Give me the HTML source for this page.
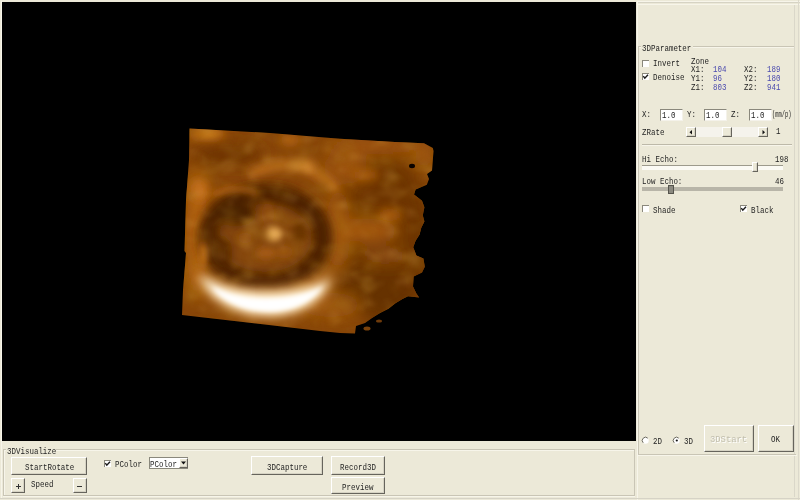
<!DOCTYPE html>
<html><head><meta charset="utf-8">
<style>
html,body{margin:0;padding:0;}
body{width:800px;height:500px;overflow:hidden;background:#ECE9D8;position:relative;font-family:"Liberation Mono",monospace;}
.a{position:absolute;}
.t{position:absolute;font-size:9px;line-height:10px;white-space:nowrap;color:#1e1e1e;transform:scaleX(.83);transform-origin:0 0;}
.b{color:#4a4aae;}
.hl{position:absolute;height:1px;background:#c9c5b5;}
.hw{position:absolute;height:1px;background:#f7f5ea;}
.vl{position:absolute;width:1px;background:#c9c5b5;}
.vw{position:absolute;width:1px;background:#f7f5ea;}
.btn{position:absolute;background:#ECE9D8;border-top:1px solid #fff;border-left:1px solid #fff;border-right:1px solid #66645c;border-bottom:1px solid #66645c;box-sizing:border-box;}
.btn::after{content:"";position:absolute;left:0;top:0;right:0;bottom:0;border-right:1px solid #d6d3c4;border-bottom:1px solid #d6d3c4;}
.chk{position:absolute;width:7px;height:7px;background:#fff;border-top:1px solid #8a887c;border-left:1px solid #8a887c;box-sizing:border-box;}
.inp{position:absolute;background:#fff;border-top:1px solid #8a887c;border-left:1px solid #8a887c;border-right:1px solid #f4f2ea;border-bottom:1px solid #f4f2ea;box-sizing:border-box;}
</style></head><body>

<!-- black viewport -->
<div class="a" style="left:2px;top:2px;width:634px;height:439px;background:#000;overflow:hidden;">
<svg width="634" height="439" viewBox="2 2 634 439" style="position:absolute;left:0;top:0;">
  <defs>
    <clipPath id="vol">
      <polygon points="189.5,128.5 270,133 340,138.7 395,141.9 424,143.3 432.8,148 433.5,151 432,170.6 427,174 429,179 426.8,184.8 415.6,189.6 414,194.4 422,200.8 424.4,207.2 422.8,215.2 424.4,221.6 421.2,228 419.6,234.4 415.6,240.8 413.2,247.2 414.3,250 416.4,255.6 423.4,258.4 424.8,266.8 422,272.4 413.6,276.6 413,286.4 416.4,293.4 419.2,297.6 408,296.2 402.4,299 395.4,303.2 388.4,308.8 380,313 372,318 365,323 356,326 355,333.5 340,333 320,331 182,315 183,290 186,253 184.5,251 186,200 189,160"/>
    </clipPath>
    <filter id="b8" filterUnits="userSpaceOnUse" x="100" y="80" width="400" height="320"><feGaussianBlur stdDeviation="8"/></filter>
    <filter id="b5" filterUnits="userSpaceOnUse" x="100" y="80" width="400" height="320"><feGaussianBlur stdDeviation="5"/></filter>
    <filter id="b3" filterUnits="userSpaceOnUse" x="100" y="80" width="400" height="320"><feGaussianBlur stdDeviation="3"/></filter>
    <filter id="b2" filterUnits="userSpaceOnUse" x="100" y="80" width="400" height="320"><feGaussianBlur stdDeviation="2"/></filter>
    <filter id="tex" filterUnits="userSpaceOnUse" x="150" y="100" width="320" height="260">
      <feTurbulence type="fractalNoise" baseFrequency="0.045 0.07" numOctaves="3" seed="11"/>
      <feColorMatrix type="matrix" values="0 0 0 0 0.36  0 0 0 0 0.16  0 0 0 0 0.01  0 0 0 3 -1.45"/>
      <feGaussianBlur stdDeviation="2"/>
    </filter>
    <filter id="tex2" filterUnits="userSpaceOnUse" x="150" y="100" width="320" height="260">
      <feTurbulence type="fractalNoise" baseFrequency="0.05 0.08" numOctaves="3" seed="5"/>
      <feColorMatrix type="matrix" values="0 0 0 0 0.85  0 0 0 0 0.5  0 0 0 0 0.1  0 0 0 3 -1.55"/>
      <feGaussianBlur stdDeviation="2"/>
    </filter>
  </defs>
  <g clip-path="url(#vol)">
    <rect x="150" y="100" width="320" height="260" fill="#884608"/>
    <g filter="url(#b8)">
      <ellipse cx="385" cy="240" rx="48" ry="85" fill="#6c3405"/>
      <ellipse cx="375" cy="290" rx="45" ry="25" fill="#663104"/>
      <ellipse cx="375" cy="185" rx="45" ry="28" fill="#6e3605"/>
      <ellipse cx="366" cy="230" rx="32" ry="11" fill="#a85a0c"/>
      <ellipse cx="345" cy="168" rx="22" ry="16" fill="#9c520a"/>
      <ellipse cx="385" cy="256" rx="25" ry="8" fill="#8a4808"/>
      <ellipse cx="424" cy="156" rx="8" ry="12" fill="#a85e0e"/>
      <ellipse cx="378" cy="146" rx="50" ry="8" fill="#a0540a"/>
      <ellipse cx="197" cy="235" rx="10" ry="65" fill="#ba6810"/>
      <ellipse cx="228" cy="155" rx="36" ry="10" fill="#6c3205"/>
      <ellipse cx="412" cy="235" rx="10" ry="60" fill="#6e3605"/>
      <ellipse cx="338" cy="230" rx="12" ry="40" fill="#a45a0c"/>
      <ellipse cx="330" cy="305" rx="30" ry="12" fill="#9e560c"/>
    </g>
    <g filter="url(#b5)">
      <ellipse cx="207" cy="134" rx="18" ry="5" fill="#cd7819"/>
      <ellipse cx="290" cy="140" rx="10" ry="4" fill="#c27018"/>
      <path d="M250,174 Q300,150 337,190" stroke="#c87620" stroke-width="8" fill="none"/>
      <ellipse cx="302" cy="164" rx="12" ry="4" fill="#e19637"/>
      <ellipse cx="199" cy="190" rx="9" ry="12" fill="#c4701a"/>
      <ellipse cx="365" cy="175" rx="14" ry="5" fill="#ac5e0c"/>
      <ellipse cx="390" cy="215" rx="12" ry="6" fill="#ac5e0c"/>
    </g>
    <g filter="url(#b5)">
      <ellipse cx="267" cy="238" rx="52" ry="39" fill="#86460a"/>
      <ellipse cx="265" cy="238" rx="57" ry="44" fill="none" stroke="#4e2402" stroke-width="20"/>
      <ellipse cx="236" cy="214" rx="20" ry="12" fill="#4a2202"/>
      <ellipse cx="222" cy="252" rx="10" ry="16" fill="#542703"/>
    </g>
    <g filter="url(#b3)">
      <ellipse cx="268" cy="214" rx="6" ry="11" fill="#8e4c0e"/>
      <ellipse cx="266" cy="253" rx="10" ry="6" fill="#a45a14"/>
      <ellipse cx="274" cy="234" rx="8" ry="7" fill="#ebaf5a"/>
      <ellipse cx="300" cy="232" rx="8" ry="10" fill="#6a3405"/>
      <ellipse cx="284" cy="252" rx="9" ry="6" fill="#9a5410"/>
      <ellipse cx="245" cy="238" rx="7" ry="5" fill="#92500e"/>
      <path d="M212,195 Q235,184 258,194" stroke="#bc6a14" stroke-width="4" fill="none"/>
      <ellipse cx="203" cy="255" rx="4" ry="14" fill="#bc6a14"/>
    </g>
    <rect x="150" y="100" width="320" height="260" filter="url(#tex)" opacity="0.35"/>
    <rect x="150" y="100" width="320" height="260" filter="url(#tex2)" opacity="0.22"/>
    <g filter="url(#b8)">
      <path d="M196,270 C210,322 312,340 338,268 C300,296 230,300 196,270 Z" fill="#dc9a48"/>
    </g>
    <g filter="url(#b5)">
      <path d="M200,274 C210,318 306,336 331,279 C300,297 230,299 200,274 Z" fill="#fff2d8"/>
    </g>
    <g filter="url(#b2)">
      <path d="M212,286 C228,314 296,325 323,286 C296,302 240,304 212,286 Z" fill="#ffffff"/>
    </g>
    <ellipse cx="412" cy="166" rx="3" ry="2.2" fill="#0a0400"/>
  </g>
  <ellipse cx="367" cy="328.5" rx="3.5" ry="2" fill="#7a420c"/>
  <ellipse cx="379" cy="321" rx="3" ry="1.6" fill="#6e3a0a"/>
</svg>
</div>

<!-- right panel frame -->
<div class="hw" style="left:637px;top:1px;width:163px;"></div>
<div class="hl" style="left:637px;top:2px;width:163px;background:#d6d3c4;"></div><div class="hw" style="left:637px;top:4px;width:163px;"></div>
<div class="vw" style="left:637px;top:1px;height:499px;"></div>
<div class="vl" style="left:794px;top:5px;height:492px;background:#dad7c9;"></div>
<div class="vl" style="left:798px;top:0px;height:500px;background:#dcd9cb;"></div>

<!-- 3DParameter group -->
<div class="hl" style="left:638px;top:46px;width:156px;"></div>
<div class="hw" style="left:638px;top:47px;width:156px;"></div>
<div class="vl" style="left:638px;top:46px;height:409px;"></div>
<div class="hl" style="left:638px;top:454px;width:158px;"></div>
<div class="hw" style="left:638px;top:455px;width:159px;"></div>
<div class="a" style="left:641px;top:42px;width:52px;height:10px;background:#ECE9D8;"></div>
<div class="t" style="left:642px;top:44px;">3DParameter</div>

<div class="chk" style="left:642px;top:60px;"></div>
<div class="t" style="left:653px;top:59px;">Invert</div>
<div class="chk" style="left:642px;top:73px;"></div>
<svg class="a" style="left:642px;top:73px;" width="8" height="8" viewBox="0 0 8 8"><polyline points="1.3,3.2 2.8,5.2 6,1.8" fill="none" stroke="#1a1a1a" stroke-width="1.4"/></svg>
<div class="t" style="left:653px;top:73px;">Denoise</div>

<div class="t" style="left:691px;top:57px;">Zone</div>
<div class="t" style="left:691px;top:65px;">X1:</div>
<div class="t b" style="left:713px;top:65px;">104</div>
<div class="t" style="left:744px;top:65px;">X2:</div>
<div class="t b" style="left:767px;top:65px;">189</div>
<div class="t" style="left:691px;top:74px;">Y1:</div>
<div class="t b" style="left:713px;top:74px;">96</div>
<div class="t" style="left:744px;top:74px;">Y2:</div>
<div class="t b" style="left:767px;top:74px;">180</div>
<div class="t" style="left:691px;top:83px;">Z1:</div>
<div class="t b" style="left:713px;top:83px;">803</div>
<div class="t" style="left:744px;top:83px;">Z2:</div>
<div class="t b" style="left:767px;top:83px;">941</div>

<div class="t" style="left:642px;top:110px;">X:</div>
<div class="inp" style="left:660px;top:109px;width:23px;height:12px;"></div>
<div class="t" style="left:662px;top:111px;">1.0</div>
<div class="t" style="left:687px;top:110px;">Y:</div>
<div class="inp" style="left:704px;top:109px;width:23px;height:12px;"></div>
<div class="t" style="left:706px;top:111px;">1.0</div>
<div class="t" style="left:731px;top:110px;">Z:</div>
<div class="inp" style="left:749px;top:109px;width:23px;height:12px;"></div>
<div class="t" style="left:751px;top:111px;">1.0</div>
<div class="t" style="left:772px;top:110px;transform:scaleX(.6);">(mm/p)</div>

<div class="t" style="left:642px;top:128px;">ZRate</div>
<div class="a" style="left:686px;top:127px;width:82px;height:10px;background:#f5f3ec;"></div>
<div class="btn" style="left:686px;top:127px;width:10px;height:10px;"></div><svg class="a" style="left:689px;top:130px;" width="4" height="5"><polygon points="3,0 3,4.5 0.5,2.25" fill="#111"/></svg>
<div class="btn" style="left:722px;top:127px;width:10px;height:10px;"></div>
<div class="btn" style="left:758px;top:127px;width:10px;height:10px;"></div><svg class="a" style="left:762px;top:130px;" width="4" height="5"><polygon points="0.5,0 0.5,4.5 3,2.25" fill="#111"/></svg>
<div class="t" style="left:776px;top:127px;">1</div>

<div class="hl" style="left:642px;top:144px;width:150px;background:#bdb9a9;"></div>
<div class="hw" style="left:642px;top:145px;width:150px;"></div>

<div class="t" style="left:642px;top:155px;">Hi Echo:</div>
<div class="t" style="left:775px;top:155px;">198</div>
<div class="a" style="left:642px;top:165px;width:141px;height:5px;background:#fbfaf4;border-top:1px solid #9d9a8c;box-sizing:border-box;"></div>
<div class="btn" style="left:752px;top:162px;width:6px;height:10px;"></div>

<div class="t" style="left:642px;top:177px;">Low Echo:</div>
<div class="t" style="left:775px;top:177px;">46</div>
<div class="a" style="left:642px;top:187px;width:141px;height:4px;background:#b8b5a8;"></div>
<div class="a" style="left:668px;top:185px;width:6px;height:9px;background:#8c8a80;border:1px solid #55544c;box-sizing:border-box;"></div>

<div class="chk" style="left:642px;top:205px;"></div>
<div class="t" style="left:653px;top:206px;">Shade</div>
<div class="chk" style="left:740px;top:205px;"></div>
<svg class="a" style="left:740px;top:205px;" width="8" height="8" viewBox="0 0 8 8"><polyline points="1.3,3.2 2.8,5.2 6,1.8" fill="none" stroke="#1a1a1a" stroke-width="1.4"/></svg>
<div class="t" style="left:751px;top:206px;">Black</div>

<svg class="a" style="left:641px;top:436px;" width="10" height="10" viewBox="0 0 10 10"><circle cx="4.5" cy="4.5" r="3.2" fill="#fff"/><path d="M2.2,6.8 A3.2,3.2 0 0 1 6.8,2.2" fill="none" stroke="#6a685e" stroke-width="1"/></svg>
<div class="t" style="left:653px;top:437px;">2D</div>
<svg class="a" style="left:672px;top:436px;" width="10" height="10" viewBox="0 0 10 10"><circle cx="4.5" cy="4.5" r="3.2" fill="#fff"/><path d="M2.2,6.8 A3.2,3.2 0 0 1 6.8,2.2" fill="none" stroke="#6a685e" stroke-width="1"/><circle cx="4.8" cy="4.5" r="1.1" fill="#111"/></svg>
<div class="t" style="left:684px;top:437px;">3D</div>
<div class="btn" style="left:704px;top:425px;width:50px;height:27px;"></div>
<div class="t" style="left:711px;top:436px;color:#fff;transform:scaleX(.98);">3DStart</div><div class="t" style="left:710px;top:435px;color:#c2bfae;transform:scaleX(.98);">3DStart</div>
<div class="btn" style="left:758px;top:425px;width:36px;height:27px;"></div>
<div class="t" style="left:771px;top:435px;">OK</div>

<!-- bottom group 3DVisualize -->
<div class="vw" style="left:1px;top:1px;height:498px;"></div>
<div class="hl" style="left:3px;top:449px;width:631px;"></div>
<div class="hw" style="left:3px;top:450px;width:632px;"></div>
<div class="vl" style="left:3px;top:449px;height:47px;"></div>
<div class="vw" style="left:4px;top:450px;height:46px;"></div>
<div class="vl" style="left:634px;top:449px;height:47px;"></div>
<div class="hl" style="left:3px;top:495px;width:631px;"></div>
<div class="hw" style="left:3px;top:496px;width:632px;"></div>
<div class="a" style="left:6px;top:445px;width:50px;height:10px;background:#ECE9D8;"></div>
<div class="t" style="left:7px;top:447px;">3DVisualize</div>

<div class="btn" style="left:11px;top:457px;width:76px;height:18px;"></div>
<div class="t" style="left:25px;top:463px;">StartRotate</div>
<div class="btn" style="left:11px;top:478px;width:14px;height:15px;"></div>
<div class="a" style="left:16px;top:486px;width:5px;height:1px;background:#333;"></div><div class="a" style="left:18px;top:484px;width:1px;height:5px;background:#333;"></div>
<div class="t" style="left:31px;top:480px;">Speed</div>
<div class="btn" style="left:73px;top:478px;width:14px;height:15px;"></div>
<div class="a" style="left:77px;top:486px;width:5px;height:1px;background:#333;"></div>

<div class="chk" style="left:104px;top:460px;"></div>
<svg class="a" style="left:104px;top:460px;" width="8" height="8" viewBox="0 0 8 8"><polyline points="1.3,3.2 2.8,5.2 6,1.8" fill="none" stroke="#1a1a1a" stroke-width="1.4"/></svg>
<div class="t" style="left:115px;top:460px;">PColor</div>
<div class="inp" style="left:149px;top:457px;width:39px;height:12px;border-right:1px solid #8a887c;border-bottom:1px solid #8a887c;"></div>
<div class="t" style="left:150px;top:460px;">PColor</div>
<div class="btn" style="left:179px;top:458px;width:9px;height:10px;"></div><svg class="a" style="left:181px;top:461px;" width="5" height="4"><polygon points="0,0.5 5,0.5 2.5,3.5" fill="#111"/></svg>

<div class="btn" style="left:251px;top:456px;width:72px;height:19px;"></div>
<div class="t" style="left:267px;top:463px;">3DCapture</div>
<div class="btn" style="left:331px;top:456px;width:54px;height:19px;"></div>
<div class="t" style="left:340px;top:463px;">Record3D</div>
<div class="btn" style="left:331px;top:477px;width:54px;height:17px;"></div>
<div class="t" style="left:342px;top:483px;">Preview</div>

<div class="hl" style="left:0px;top:498px;width:800px;background:#d6d3c6;"></div>
</body></html>
